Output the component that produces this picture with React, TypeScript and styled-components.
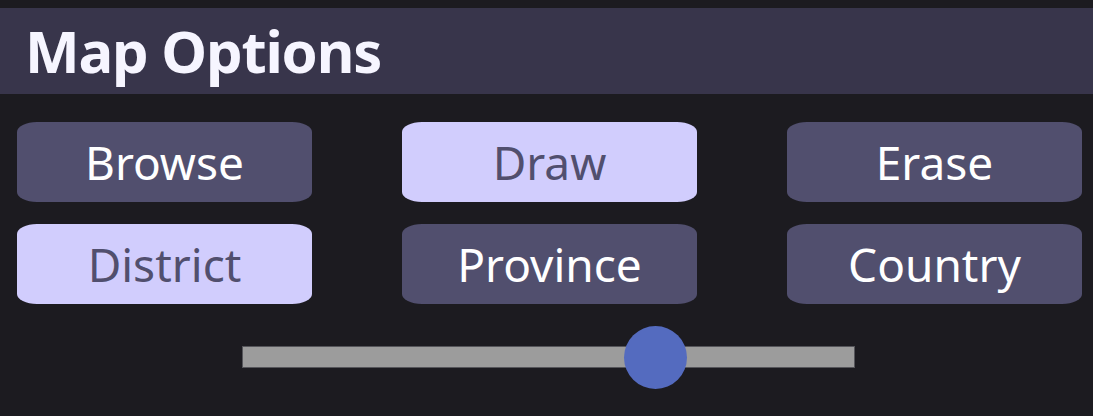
import React from "react";
import styled, { createGlobalStyle } from "styled-components";

const Global = createGlobalStyle`
  html, body { margin: 0; padding: 0; background: #1c1b20; }
  body { font-family: "Noto Sans", "Open Sans", sans-serif; }
`;

const Page = styled.div`
  width: 1093px;
  height: 416px;
  background: #1c1b20;
  padding-top: 8px;
  box-sizing: border-box;
  display: flex;
  flex-direction: column;
`;

const Header = styled.header`
  height: 86px;
  background: #38354b;
  display: flex;
  align-items: center;
  padding-left: 25px;
`;

const Title = styled.h1`
  margin: 0;
  font-family: "Noto Sans", sans-serif;
  font-weight: 700;
  font-size: 58px;
  color: #f6f5ff;
  letter-spacing: -1.2px;
  line-height: 1;
`;

const Grid = styled.div`
  display: grid;
  grid-template-columns: repeat(3, 295px);
  column-gap: 90px;
  row-gap: 22px;
  padding: 28px 0 0 17px;
`;

const Btn = styled.button<{ $active?: boolean }>`
  width: 295px;
  height: 80px;
  border: none;
  border-radius: 20px / 10px;
  background: ${(p) => (p.$active ? "#d1cdfd" : "#514f6e")};
  color: ${(p) => (p.$active ? "#514f6e" : "#ffffff")};
  font-family: "Noto Sans", sans-serif;
  font-size: 46px;
  font-weight: 400;
  display: flex;
  align-items: center;
  justify-content: center;
  padding: 0;
  cursor: pointer;
`;

const SliderWrap = styled.div`
  display: flex;
  justify-content: center;
  padding-top: 42px;
  padding-left: 4px;
`;

const Range = styled.input`
  -webkit-appearance: none;
  appearance: none;
  width: 613px;
  height: 22px;
  margin: 0;
  background: #9c9c9c;
  border: 1px solid #55555a;
  box-sizing: border-box;
  outline: none;
  &::-webkit-slider-thumb {
    -webkit-appearance: none;
    appearance: none;
    width: 63px;
    height: 63px;
    border-radius: 50%;
    background: #546bbf;
    border: none;
  }
  &::-moz-range-thumb {
    width: 63px;
    height: 63px;
    border-radius: 50%;
    background: #546bbf;
    border: none;
  }
`;

const buttons = [
  { label: "Browse", active: false },
  { label: "Draw", active: true },
  { label: "Erase", active: false },
  { label: "District", active: true },
  { label: "Province", active: false },
  { label: "Country", active: false },
];

export default function App() {
  const [v, setV] = React.useState(69.5);
  return (
    <>
      <Global />
      <Page>
        <Header>
          <Title>Map Options</Title>
        </Header>
        <Grid>
          {buttons.map((b) => (
            <Btn key={b.label} $active={b.active}>
              {b.label}
            </Btn>
          ))}
        </Grid>
        <SliderWrap>
          <Range
            type="range"
            min={0}
            max={100}
            step={0.5}
            value={v}
            onChange={(e) => setV(Number(e.target.value))}
          />
        </SliderWrap>
      </Page>
    </>
  );
}
